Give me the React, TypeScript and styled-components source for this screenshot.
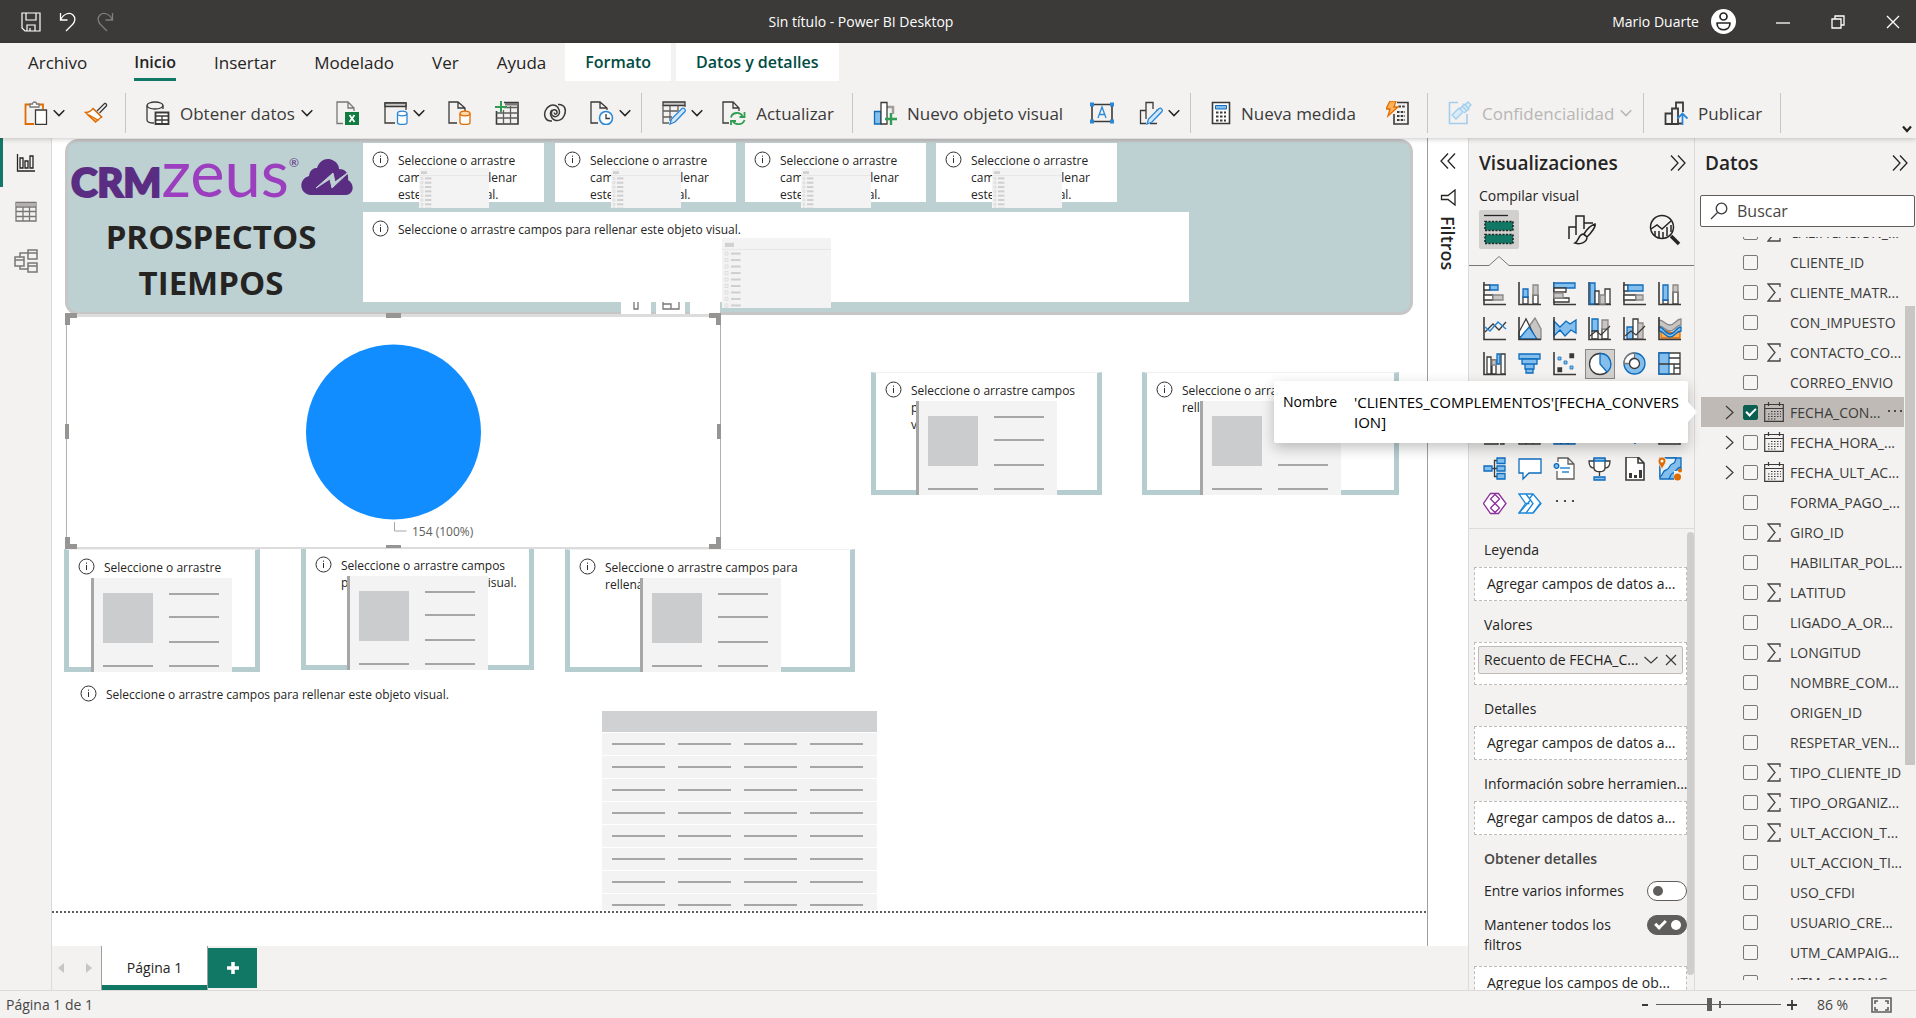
import React from "react";
import styled, { createGlobalStyle, css } from "styled-components";

const GlobalStyle = createGlobalStyle`
  *, *::before, *::after { box-sizing: border-box; }
  body { margin: 0; background: #f3f2f1; }
  body, button, input { font-family: "Open Sans", "Noto Sans", sans-serif; color: #252423; }
  button { border: 0; padding: 0; background: none; cursor: pointer; }
  svg { display: block; flex: none; }
`;

const GREEN = "#117865";
const DARK = "#3b3a39";
const BLUE = "#0f6cbd";
const SKY = "#83beec";
const ORANGE = "#e06c00";

const Shell = styled.div`
  height: 100vh;
  display: flex;
  flex-direction: column;
  background: #f3f2f1;
  overflow: hidden;
`;

/* ---------- title bar ---------- */

const TitleBar = styled.header`
  height: 43px;
  flex: none;
  display: grid;
  grid-template-columns: 1fr auto 1fr;
  align-items: center;
  background: #3b3a38;
  color: #fff;
  font-size: 14px;
  padding: 0 15px 0 21px;
`;

const QuickActions = styled.div`
  display: flex;
  gap: 17px;
`;

const WindowTitle = styled.h1`
  margin: 0;
  font-size: 14px;
  font-weight: 400;
  padding-right: 200px;
`;

const WindowSide = styled.div`
  display: flex;
  justify-content: flex-end;
  align-items: center;
  gap: 40px;
`;

const Account = styled.button`
  display: flex;
  align-items: center;
  gap: 12px;
  color: #fff;
  font-size: 14px;
`;

/* ---------- ribbon ---------- */

const Ribbon = styled.div`
  flex: none;
  background: #f3f2f1;
  box-shadow: 0 1px 5px rgba(0, 0, 0, 0.22);
  z-index: 2;
`;

const TabStrip = styled.nav`
  display: flex;
  height: 38px;
  padding-left: 28px;
`;

const FileTab = styled.button`
  margin-right: 28px;
  font-size: 17px;
  line-height: 39px;
`;

const ContextTabs = styled.div`
  display: flex;
  gap: 5px;
`;

const RibbonTab = styled.button<{ $active?: boolean; $context?: boolean }>`
  height: 38px;
  padding: 0 ${(p) => (p.$context ? 20 : 19)}px;
  font-size: ${(p) => (p.$active || p.$context ? 16 : 17)}px;
  line-height: 39px;
  color: ${(p) => (p.$context ? "#004b42" : "#252423")};
  font-weight: ${(p) => (p.$active || p.$context ? 600 : 400)};
  background: ${(p) => (p.$context ? "#fff" : "transparent")};
  span {
    display: block;
    height: 38px;
    border-bottom: 3px solid ${(p) => (p.$active ? GREEN : "transparent")};
  }
`;

const ToolRow = styled.div`
  height: 57px;
  padding-top: 7px;
  display: grid;
  grid-template-columns: 126px 516px 211px 338px 237px 216px 137px minmax(0, 1fr);
  align-items: center;
`;

const ToolGroup = styled.div<{ $roomy?: boolean }>`
  height: 40px;
  display: flex;
  align-items: center;
  justify-content: space-between;
  border-right: 1px solid #c8c6c4;
  padding: 0 ${(p) => (p.$roomy ? 17 : 10)}px 0 20px;
  &:first-child { padding-left: 24px; }
`;

const Tool = styled.button<{ $off?: boolean }>`
  display: flex;
  align-items: center;
  gap: 5px;
  font-size: 17px;
  color: ${(p) => (p.$off ? "#b8b6b4" : "#3b3a39")};
  white-space: nowrap;
  span { padding: 0 1px 0 5px; font-weight: 400; }
`;

const RibbonToggle = styled.div`
  display: flex;
  justify-content: flex-end;
  align-self: end;
  padding: 0 3px 3px 0;
`;

/* ---------- body ---------- */

const Body = styled.div`
  flex: 1;
  min-height: 0;
  position: relative;
  display: grid;
  grid-template-columns: 52px minmax(0, 1fr) 226px 222px;
`;

const ViewRail = styled.nav`
  border-right: 1px solid #dddbd9;
  display: flex;
  flex-direction: column;
`;

const ViewButton = styled.button<{ $active?: boolean }>`
  height: 49px;
  display: flex;
  align-items: center;
  justify-content: center;
  border-left: 3px solid ${(p) => (p.$active ? GREEN : "transparent")};
  border-right: 3px solid transparent;
`;

const Center = styled.main`
  display: flex;
  flex-direction: column;
  min-width: 0;
  min-height: 0;
`;

const Stage = styled.div`
  flex: 1;
  min-height: 0;
  display: flex;
  background: #fff;
`;

const Canvas = styled.section`
  flex: 1;
  min-width: 0;
  position: relative;
  overflow: hidden;
`;

type Box = { $x: number; $y: number; $w?: number; $h?: number };

const placed = css<Box>`
  position: absolute;
  left: ${(p) => p.$x}px;
  top: ${(p) => p.$y}px;
  ${(p) => p.$w && `width: ${p.$w}px;`}
  ${(p) => p.$h && `height: ${p.$h}px;`}
`;

const Banner = styled.div<Box>`
  ${placed}
  background: #bdd1d3;
  border: 3px solid #c6c6c6;
  border-radius: 13px;
`;

const Logo = styled.div<Box>`
  ${placed}
  display: flex;
  align-items: baseline;
  font-family: Lato, sans-serif;
  line-height: 60px;
`;

const LogoCrm = styled.span`
  font-size: 40px;
  font-weight: 900;
  color: #5b2d82;
  -webkit-text-stroke: 2px #5b2d82;
`;

const LogoZeus = styled.span`
  font-size: 65px;
  color: #9b3fbf;
`;

const LogoMark = styled.sup`
  align-self: flex-start;
  font-size: 12px;
  line-height: 42px;
  color: #5b2d82;
`;

const Cloud = styled.svg`
  align-self: center;
  margin-left: 2px;
`;

const ReportTitle = styled.h2<Box>`
  ${placed}
  margin: 0;
  text-align: center;
  font-size: 33px;
  line-height: 46px;
  font-weight: 700;
`;

const Visual = styled.article<Box & { $framed?: boolean }>`
  ${placed}
  background: #fff;
  ${(p) =>
    p.$framed &&
    `border: 5px solid #b5cdcf; border-top: 1px solid #f0f0f0;`}
`;

const HintClip = styled.div`
  height: 100%;
  overflow: hidden;
`;

const Hint = styled.p`
  margin: 0;
  display: flex;
  gap: 9px;
  padding: 8px 0 0 9px;
  font-size: 12px;
  line-height: 17px;
  white-space: nowrap;
`;

const HintLines = styled.span`
  padding-top: 1px;
  span { display: block; }
`;

const Ghost = styled.div<Box>`
  ${placed}
`;

const Selected = styled.article<Box>`
  ${placed}
  background: #fff;
  border: 1px solid #b3b0ad;
  border-top: 3px solid #dcdcdc;
  border-bottom: 2px solid #dcdcdc;
`;

const Handle = styled.i<Box & { $corner?: "tl" | "tr" | "bl" | "br" }>`
  ${placed}
  ${(p) =>
    p.$corner
      ? `border: 0 solid #979593;
         border-${p.$corner[0] === "t" ? "top" : "bottom"}-width: 5px;
         border-${p.$corner[1] === "l" ? "left" : "right"}-width: 5px;`
      : "background: #979593;"}
`;

const HeaderButton = styled.button<Box>`
  ${placed}
  background: #fff;
  display: flex;
  justify-content: center;
`;

const FoldLine = styled.div<Box>`
  ${placed}
  right: 0;
  height: 2px;
  background: repeating-linear-gradient(90deg, #605e5c 0 2px, transparent 2px 4px);
`;

const GhostTable = styled.div<Box>`
  ${placed}
  display: grid;
  grid-template-rows: 21px repeat(8, 22px);
  row-gap: 1px;
  overflow: hidden;
`;

const GhostHead = styled.div`
  background: #d0d1d3;
`;

const GhostRow = styled.div`
  background: #f3f3f3;
  display: grid;
  grid-template-columns: repeat(4, 53px);
  column-gap: 13px;
  padding-left: 10px;
  align-items: center;
  i { height: 2px; background: #a6a6a6; }
`;

/* ---------- filters strip ---------- */

const FilterStrip = styled.aside`
  width: 41px;
  border-left: 1px solid #a19f9d;
  display: flex;
  flex-direction: column;
  align-items: center;
  padding-top: 14px;
  gap: 19px;
`;

const FilterHead = styled.div`
  display: flex;
  flex-direction: column;
  align-items: center;
  gap: 10px;
`;

const FilterName = styled.h2`
  margin: 0;
  writing-mode: vertical-rl;
  font-size: 18px;
  line-height: 20px;
  font-weight: 600;
`;

/* ---------- page tabs ---------- */

const PageTabs = styled.div`
  height: 44px;
  flex: none;
  display: flex;
  align-items: center;
`;

const PageArrows = styled.div`
  width: 49px;
  display: flex;
  justify-content: space-between;
  padding: 0 9px 0 6px;
`;

const PageTab = styled.button`
  width: 107px;
  height: 44px;
  padding-bottom: 2px;
  background: #fff;
  border: 1px solid #a19f9d;
  border-width: 0 1px 0 1px;
  box-shadow: inset 0 -5px ${GREEN};
  font-size: 14px;
  font-weight: 500;
`;

const AddPage = styled.button`
  width: 49px;
  height: 40px;
  display: flex;
  align-items: center;
  justify-content: center;
  background: ${GREEN};
`;

/* ---------- panes ---------- */

const Pane = styled.aside`
  min-width: 0;
  min-height: 0;
  display: flex;
  flex-direction: column;
  border-left: 1px solid #dddbd9;
`;

const PaneHead = styled.div`
  height: 50px;
  flex: none;
  display: flex;
  align-items: center;
  justify-content: space-between;
  padding: 0 8px 0 10px;
`;

const PaneTitle = styled.h2`
  margin: 0;
  font-size: 19px;
  font-weight: 600;
`;

const PaneSub = styled.h3`
  margin: 0 0 6px 10px;
  font-size: 14px;
  line-height: 16px;
  font-weight: 500;
`;

const ModeTabs = styled.div`
  display: flex;
  justify-content: space-between;
  padding: 0 9px 0 10px;
`;

const ModeTab = styled.button<{ $active?: boolean }>`
  width: 40px;
  height: 39px;
  display: flex;
  align-items: center;
  justify-content: center;
  border-radius: 2px;
  background: ${(p) => (p.$active ? "#d2d0ce" : "transparent")};
`;

const Notch = styled.svg`
  width: 100%;
  height: 17px;
`;

const Gallery = styled.div`
  display: grid;
  grid-template-columns: repeat(6, 35px);
  grid-auto-rows: 35px;
  padding: 11px 0 6px 9px;
  border-bottom: 1px solid #dddbd9;
`;

const GalleryItem = styled.button<{ $active?: boolean }>`
  width: 30px;
  height: 30px;
  margin: 2px;
  display: flex;
  align-items: center;
  justify-content: center;
  ${(p) => p.$active && "background: #d2d0ce; box-shadow: inset 0 0 0 1px #8a8886;"}
`;

const Wells = styled.div`
  flex: 1;
  min-height: 0;
  display: grid;
  grid-template-columns: minmax(0, 1fr) 7px;
  overflow: hidden;
`;

const WellList = styled.div`
  padding: 4px 0 0 5px;
  min-width: 0;
`;

const WellName = styled.h4<{ $strong?: boolean }>`
  margin: 0;
  padding-left: 10px;
  font-size: 14px;
  line-height: 34px;
  font-weight: ${(p) => (p.$strong ? 600 : 400)};
  color: ${(p) => (p.$strong ? "#484644" : "#252423")};
  white-space: nowrap;
`;

const Well = styled.div<{ $filled?: boolean }>`
  height: ${(p) => (p.$filled ? 43 : 34)}px;
  margin-bottom: 7px;
  padding: ${(p) => (p.$filled ? "3px" : "0 5px 0 12px")};
  background: #fff;
  border: 1px dashed #bebbb8;
  font-size: 14px;
  line-height: 32px;
  white-space: nowrap;
  overflow: hidden;
`;

const Chip = styled.div`
  height: 28px;
  display: flex;
  align-items: center;
  justify-content: space-between;
  padding: 0 5px;
  background: #edebe9;
  border: 1px solid #bebbb8;
  border-radius: 2px;
  font-size: 14px;
`;

const ChipActions = styled.span`
  display: flex;
  align-items: center;
  gap: 7px;
`;

const SwitchGroup = styled.div`
  display: grid;
  gap: 4px;
  padding-bottom: 6px;
`;

const SwitchRow = styled.label`
  display: flex;
  justify-content: space-between;
  align-items: flex-start;
  padding: 5px 0 5px 10px;
  font-size: 14px;
  line-height: 20px;
`;

const SwitchText = styled.span`
  width: 150px;
`;

const Switch = styled.input`
  appearance: none;
  position: relative;
  margin: 0;
  width: 40px;
  height: 20px;
  border: 1px solid #605e5c;
  border-radius: 10px;
  background: #fff;
  &::before {
    content: "";
    position: absolute;
    left: 5px;
    top: 4px;
    width: 10px;
    height: 10px;
    border-radius: 50%;
    background: #605e5c;
  }
  &:checked { background: #605e5c; }
  &:checked::before { left: 23px; background: #fff; }
  &:checked::after {
    content: "";
    position: absolute;
    left: 7px;
    top: 4px;
    width: 11px;
    height: 7px;
    border: solid #fff;
    border-width: 0 0 3px 3px;
    transform: rotate(-45deg);
  }
`;

const Thumb = styled.div<{ $h: number; $top: number }>`
  height: ${(p) => p.$h}px;
  margin-top: ${(p) => p.$top}px;
  background: #c8c6c4;
`;

const RoundThumb = styled(Thumb)`
  border-radius: 4px;
  background: #d0cecc;
`;

/* ---------- fields ---------- */

const Search = styled.label`
  height: 32px;
  flex: none;
  margin: 7px 1px 0 5px;
  display: flex;
  align-items: center;
  gap: 7px;
  padding-left: 9px;
  background: #fff;
  border: 1px solid #605e5c;
  border-radius: 2px;
`;

const SearchInput = styled.input`
  flex: 1;
  min-width: 0;
  border: 0;
  outline: 0;
  background: none;
  font-size: 16px;
  &::placeholder { color: #484644; opacity: 1; }
`;

const FieldArea = styled.div`
  flex: 1;
  min-height: 0;
  margin: 10px 1px 10px 6px;
  display: grid;
  grid-template-columns: minmax(0, 1fr) 10px;
  column-gap: 1px;
  overflow: hidden;
`;

const FieldList = styled.ul`
  list-style: none;
  margin: -20px 0 0;
  padding: 0;
  min-width: 0;
`;

const Field = styled.li<{ $active?: boolean }>`
  height: 30px;
  display: grid;
  grid-template-columns: 24px minmax(0, 1fr) auto;
  align-items: center;
  padding-left: 18px;
  background: ${(p) => (p.$active ? "#bfbab6" : "transparent")};
`;

const FieldLabel = styled.label`
  grid-column: 2;
  display: grid;
  grid-template-columns: 15px 32px minmax(0, 1fr);
  align-items: center;
  font-size: 14px;
  color: #3b3a39;
  white-space: nowrap;
  svg { justify-self: center; }
`;

const FieldName = styled.span`
  grid-column: 3;
`;

const Expander = styled.button`
  grid-column: 1;
  padding-left: 6px;
`;

const Check = styled.input`
  appearance: none;
  position: relative;
  margin: 0;
  width: 15px;
  height: 15px;
  border: 1px solid #7a7876;
  border-radius: 2px;
  background: #f6f5f4;
  &:checked { background: #0b5f50; border-color: #0b5f50; }
  &:checked::after {
    content: "";
    position: absolute;
    left: 2px;
    top: 2px;
    width: 10px;
    height: 6px;
    border: solid #fff;
    border-width: 0 0 2px 2px;
    transform: rotate(-45deg);
  }
`;

const Tooltip = styled.div`
  position: absolute;
  right: 228px;
  top: 243px;
  z-index: 3;
  width: 414px;
  display: grid;
  grid-template-columns: 71px minmax(0, 1fr);
  padding: 11px 9px 11px 9px;
  background: #fff;
  border-radius: 2px;
  box-shadow: 0 5px 14px rgba(0, 0, 0, 0.24);
  color: #000;
  font-size: 14px;
  line-height: 20px;
  &::after {
    content: "";
    position: absolute;
    right: -9px;
    top: 21px;
    border: solid transparent;
    border-width: 10px 0 10px 9px;
    border-left-color: #fff;
  }
  b { font-size: 15px; font-weight: 500; overflow-wrap: anywhere; }
`;

/* ---------- status bar ---------- */

const StatusBar = styled.footer`
  height: 28px;
  flex: none;
  display: flex;
  justify-content: space-between;
  align-items: center;
  border-top: 1px solid #dddbd9;
  padding: 0 24px 0 6px;
  font-size: 14px;
  color: #484644;
  z-index: 1;
  background: #f3f2f1;
`;

const ZoomTools = styled.div`
  display: flex;
  align-items: center;
  gap: 5px;
`;

const ZoomSign = styled.button`
  width: 12px;
  display: flex;
  justify-content: center;
`;

const ZoomSlider = styled.input`
  appearance: none;
  width: 125px;
  height: 14px;
  margin: 0;
  background:
    linear-gradient(#605e5c, #605e5c) 63px 50% / 2px 7px no-repeat,
    linear-gradient(#605e5c, #605e5c) 0 50% / 100% 1px no-repeat;
  &::-webkit-slider-thumb {
    appearance: none;
    width: 5px;
    height: 13px;
    background: #605e5c;
  }
`;

const ZoomValue = styled.output`
  width: 63px;
  padding-right: 4px;
  text-align: center;
`;

/* ---------- drawings ---------- */

type ArtProps = { w?: number; h?: number; box?: string; children: React.ReactNode; sw?: number; c?: string };
const Art = ({ w = 24, h = 24, box, children, sw = 1.3, c = DARK }: ArtProps) => (
  <svg width={w} height={h} viewBox={box || `0 0 ${w} ${h}`} fill="none" stroke={c} strokeWidth={sw} aria-hidden="true">
    {children}
  </svg>
);

const Chevron = ({ c = "#252423" }: { c?: string }) => (
  <Art w={12} h={12} c={c} sw={1.5}><path d="M.7 3.2 6 8.6l5.3-5.4" /></Art>
);

const InfoIcon = () => (
  <Art w={17} h={17} c="#323130" sw={1}><circle cx="8.5" cy="8.5" r="7.5" /><path d="M8.5 7v5M8.5 4.6v1.2" /></Art>
);

const Double = ({ left }: { left?: boolean }) => (
  <Art w={16} h={18} sw={1.3} c="#252423">
    {left ? <path d="M8 1.5 1 9l7 7.500M15 1.500 8 9l7 7.500" /> : <path d="m1 1.500 7 7.500-7 7.500M8 1.500 15 9l-7 7.500" />}
  </Art>
);

const tool = {
  paste: <Art><path d="M6 3.500H1.500V23H10M15 3.500h4V8" stroke={ORANGE} strokeWidth="1.800" /><path d="M6 6V3h2.500a2 2 0 0 1 4 0H15v3z" fill="#fff" stroke="#797775" /><path d="M11.500 9h11v14.500h-11z" fill="#fff" /></Art>,
  brush: <Art><path d="m13 10 7.500-7.500a1.700 1.700 0 0 1 2 2.300L15.500 12M9 7.500l9 9" /><path d="m9 7.500 8.500 8.500-6 5L1.500 11.500c4 0 6-2 7.500-4z" fill="#fff" stroke={ORANGE} /><path d="m5 14 9 5-2.500 2L4 14z" fill="#ffb25a" stroke={ORANGE} /></Art>,
  data: <Art><ellipse cx="9" cy="4.500" rx="8" ry="3.500" /><path d="M1 4.500V19c0 1.800 3 3 7 3M17 4.500V8" /><path d="M9.500 11.500h13V23h-13z" fill="#fff" strokeWidth="1.800" /><path d="M9.500 15h13M9.500 19h13M16 15v8" /></Art>,
  excel: <Art><path d="M7 22.500H1V1h11l6 6v3M12 1v6h6" stroke="#797775" /><path d="M9 11h14v13H9z" fill="#107c41" stroke="none" /><path d="m13.500 14 5 7M18.500 14l-5 7" stroke="#fff" strokeWidth="1.800" /></Art>,
  hub: <Art><path d="M11 22H1V2h21v7" /><path d="M1 2h21v3.500H1z" fill="#c8c6c4" /><path d="M13.500 12.500v9c0 2.600 9.500 2.600 9.500 0v-9" fill="#fff" stroke="#2b88d8" /><ellipse cx="18.200" cy="12.500" rx="4.700" ry="2.300" fill="#fff" stroke="#2b88d8" /></Art>,
  sql: <Art><path d="M9 22H1V1h9l7 6v3M10 1v6h7" /><path d="M12 12.500v9c0 2.600 10 2.600 10 0v-9" fill="#fff" stroke={ORANGE} /><ellipse cx="17" cy="12.500" rx="5" ry="2.300" fill="#ffd8ae" stroke={ORANGE} /></Art>,
  enter: <Art><path d="M9 1.500h14V23H1.500V10" strokeWidth="1.600" /><path d="M1.500 12H23M1.500 17H23M8.500 9v14M15.500 5v18M9 6.500h14" stroke="#605e5c" /><path d="M10 2h13v2.500H10z" fill="#797775" stroke="none" /><path d="M6 0v12M0 6h12" stroke="#2f9e52" strokeWidth="2" /></Art>,
  verse: <Art sw={1.500}><path d="M9 20C2 20.500.500 14 2.500 9.500S9 3 12.500 4.500 18 12 15 14.500 8 15 8.500 11.500 13.500 8 14 11s-3 2.500-2.500.500" /><path d="M15 3.500C22 3 23.500 9 21.500 14S15 20.500 11.500 19 6 12 9 9" /></Art>,
  recent: <Art><path d="M8 22H1V1h9l7 6v2M10 1v6h7" /><circle cx="16" cy="17" r="6.500" fill="#fff" stroke="#2b88d8" strokeWidth="1.600" /><path d="M16 13v4.500h4" /></Art>,
  transform: <Art><path d="M1 1h22v3.500H1z" fill="#c8c6c4" /><path d="M1 4v18h6M23 4v2M1 10h15M1 16h9M8 4.500V20M16 4.500V10" stroke="#605e5c" /><path d="m8 23 1.500-5L20 7.500c2-1 4 1 3 3L13 21z" fill="#cfe6f8" stroke="#2b88d8" /></Art>,
  refresh: <Art><path d="M7 22H1V1h10l6 6v3M11 1v6h6" /><path d="M9 16.500c1-5.500 9-6 11.500-1.500M22.500 11v5h-5M22.500 19c-1.500 5-9 5.500-11.500 1.500M9 24.500V20h5" stroke="#2f9e52" strokeWidth="1.800" /></Art>,
  visual: <Art><path d="M1.500 10.500H8V23H1.500z" fill={SKY} stroke={BLUE} /><path d="M14 6h6v7" stroke="#a19f9d" strokeWidth="2.500" /><path d="M8 1.500h6V23H8z" fill="#fff" /><path d="M18 12v12M12 18h12" stroke="#2f9e52" strokeWidth="2.400" /></Art>,
  text: <Art w={26}><path d="M3 3.500h20v17H3z" strokeWidth="1.600" /><path d="M1 1.500h4v4H1zM21 1.500h4v4h-4zM1 18.500h4v4H1zM21 18.500h4v4h-4z" fill="#2b88d8" stroke="none" /><path d="m9 17 4-11 4 11M10.500 13.500h5" stroke="#2b88d8" /></Art>,
  shapes: <Art><path d="M7 22.500H1.500V9.500H7M7 18V1.500h7V8M17 9.500h2M18 22.500h-7" /><path d="m8 23 1.500-5L20 7.500c2-1 4 1 3 3L13 21z" fill="#cfe6f8" stroke="#2b88d8" /></Art>,
  calc: <Art w={20}><path d="M1.500 1.500h17v21h-17z" fill="#fff" strokeWidth="1.600" /><path d="M4.500 4.500h11v3.500h-11z" fill={SKY} stroke={BLUE} strokeWidth="1" /><path d="M5 11.500h10M5 15.500h10M5 19.500h10" strokeDasharray="2.500 1.500" strokeWidth="2.200" /></Art>,
  quick: <Art><path d="M11 1.500h11V23H8V13" strokeWidth="1.600" /><path d="M12.500 5.500h6.500M11 11h8M11 15h8M11 19h8" strokeDasharray="2.500 1.200" strokeWidth="2" /><path d="M4 0h6L8 6h4L2 15l2-7H0z" fill="#ffb25a" stroke={ORANGE} /></Art>,
  label: <Art c="#a3cdea"><path d="M10 1.500H1.500v21H19V13" strokeWidth="1.600" /><path d="m4 14 7-7 4 4-7 7zM12 8l4-5 5 5-5 4M14 5l5 5M20 1l3 3-3 3-3-3z" fill="#d8ebf8" /></Art>,
  publish: <Art><path d="M1.500 12.500H8V23H1.500zM8 12V7.500h6V23H8M12 7V1.500h7V11M14 22.500h4" strokeWidth="1.800" /><path d="M18.500 24V13M13.500 17.500l5-5 5 5" stroke="#2b88d8" strokeWidth="1.800" /></Art>,
};

const axis = <path d="M1 0v22.500h22" stroke={DARK} strokeWidth="1.600" />;
const G = "#c8c6c4";
const blue = { fill: SKY, stroke: BLUE };
const gray = { fill: G, stroke: "#8a8886" };

const chartIcons: React.ReactNode[] = [
  <>{axis}<path d="M1 3h6v5H1zM1 13h9v5H1z" fill="#fff" /><path d="M7 3h8v5H7z" {...blue} /><path d="M10 13h10v5H10z" {...gray} /></>,
  <>{axis}<path d="M5 15h5v7H5zM15 13h5v9h-5z" fill="#fff" /><path d="M5 7h5v8H5z" {...blue} /><path d="M15 3h5v10h-5z" {...gray} /></>,
  <>{axis}<path d="M1 1h21v5H1z" {...blue} /><path d="M1 6h12v4H1zM1 16h15v4H1z" fill="#fff" /><path d="M1 11h9v5H1z" {...gray} /></>,
  <>{axis}<path d="M2 1h5v21H2z" {...blue} /><path d="M7 9h4v13H7zM17 7h5v15h-5z" fill="#fff" /><path d="M12 13h5v9h-5z" {...gray} /></>,
  <>{axis}<path d="M1 3h4v6H1zM1 13h12v5H1z" fill="#fff" /><path d="M5 3h15v6H5z" {...blue} /><path d="M13 13h7v5h-7z" {...gray} /></>,
  <>{axis}<path d="M5 18h5v4H5zM15 10h5v12h-5z" fill="#fff" /><path d="M5 3h5v15H5z" {...blue} /><path d="M15 3h5v7h-5z" {...gray} /></>,
  <>{axis}<path d="m2 15 8-8 6 6 7-8" /><path d="m2 10 5 4 8-9 8 7" stroke="#2b88d8" strokeWidth="1.600" /></>,
  <><path d="m12 8 5-7 6 11v10H12z" {...gray} /><path d="M1 15 8 2l9 18H1z" fill="#fff" /><path d="m1 22 10-12 8 12z" {...blue} />{axis}</>,
  <><path d="m1 4 6 6 6-6 4 3 6-4v13l-5-3-6 6-5-6-6 6z" {...blue} />{axis}</>,
  <><path d="M4 2h6v12H4z" {...blue} /><path d="M4 14h6v8H4zM14 12h6v10h-6z" fill="#fff" /><path d="M14 3h6v9h-6z" {...gray} />{axis}<path d="m2 19 6-5 5 4 9-9" /></>,
  <><path d="M4 10h6v12H4z" {...blue} /><path d="M10 2h5v20h-5z" fill="#fff" /><path d="M15 6h5v16h-5z" {...gray} />{axis}<path d="m2 19 6-5 5 4 9-9" /></>,
  <><path d="M3 14h5c3 0 5 3 8 1h6v6H3z" fill="#ffb25a" stroke={ORANGE} /><path d="M1 3c5 0 6 5 11 5s6-6 11-6v6c-5 0-6 6-11 6S6 9 1 9z" {...gray} /><path d="M1 10c5 0 6 7 11 7s6-7 11-7v4c-5 0-6 6-11 6S6 14 1 14z" {...blue} />{axis}</>,
  <>{axis}<path d="M4 5h4v17H4zM9 8h4v14H9zM18 2h4v20h-4z" fill="#fff" /><path d="M9 8h4v5H9z" {...gray} /><path d="M14 2h3v10h-3z" {...blue} /></>,
  <><path d="M1 2h21v5H1z" {...blue} /><path d="M4 7h15v5H4zM7 12h9v5H7zM8 17h7v4H8z" {...blue} /></>,
  <>{axis}<path d="M5 5h3v3H5zM11 9h3v3h-3zM17 14h3v3h-3z" {...blue} strokeWidth="0.800" /><path d="M17 2h3.500v3.500H17zM5 16h3.500v3.500H5z" fill={DARK} /></>,
  <><circle cx="12" cy="12" r="10.500" fill="#fff" /><path d="M12 1.500a10.500 10.500 0 0 1 7 18.500l-7-8z" {...blue} /></>,
  <><circle cx="11.500" cy="11.500" r="10.500" {...blue} /><path d="M1 11.500A10.500 10.500 0 0 1 11.500 1v5a5 5 0 0 0-5 5.500z" fill="#fff" stroke="#797775" /><circle cx="11.500" cy="11.500" r="5" fill="#fff" /></>,
  <><path d="M1 1h21v21H1z" fill="#fff" /><path d="M1 1h10v21H1z" {...blue} /><path d="M1 12h21M16 12v10M16 16h6M11 6h11" /></>,
  <><circle cx="11.500" cy="11.500" r="10" {...blue} /><path d="M2 9h19M2 15h19" /></>,
  <><path d="M1 3h21v17H1z" {...blue} /></>,
  <><path d="M2 20V8l8-6 10 6v12z" {...blue} /></>,
  <><path d="M2 18a10 10 0 0 1 20 0" {...blue} /></>,
  <><path d="M1 5h21v14H1z" fill="#fff" /></>,
  <><path d="M1 3h21v17H1zM1 8h21" fill="#fff" /></>,
  <><path d="M1 3h14v19H1M17 22h4v-6" /></>,
  <><path d="M1 2h21v20H1zM1 8h21M8 2v20M15 2v20M1 15h21" fill="#fff" /></>,
  <><path d="M1 2h21v20H1z" {...blue} /><path d="M1 8h21M8 2v20M15 2v20M1 15h21" /></>,
  <><path d="M3 5 9 18 15 5" stroke="#2b88d8" /></>,
  <><path d="M12 2v20" stroke="#2b88d8" strokeWidth="2" /></>,
  <><path d="M1 2h21v20H1zM1 8h21" fill="#fff" strokeWidth="1.600" /></>,
  <><path d="M8 11.500h6M14 3.500h-2.500v16H14M11 11.500h4" /><path d="M1 9h8v5H1zM14 1h8v5.500h-8zM14 9h8v5h-8zM14 16.500h8V22h-8z" {...blue} /></>,
  <path d="M1 2h22v14H11l-6 6v-6H1z" stroke={BLUE} fill="#fff" />,
  <><path d="M5 5V1h10l6 6v15H4v-8M15 1v6h6" fill="#fff" stroke="#605e5c" /><circle cx="3.500" cy="9" r="2.300" {...blue} /><path d="M7 11h10M9 15h7" stroke="#2b88d8" strokeWidth="1.600" /></>,
  <><path d="M6 2h11v9c0 5-11 5-11 0zM6 4H1c0 5 2 7 5 7M17 4h5c0 5-2 7-5 7M11.500 15v4" fill="#fff" /><path d="M6 1h11v3H6zM6 20h11v3H6z" {...blue} /></>,
  <><path d="M3 0h12l6 6v17H3zM15 0v6h6" fill="#fff" strokeWidth="1.600" /><path d="M6 16h3v5H6zM11 18h3v3h-3zM16 13h3v8h-3z" fill={DARK} stroke="none" /></>,
  <><path d="M2 1h21v21H2z" {...blue} /><path d="M2 1h16c-1 4-1 5-4 6s-2 5-6 6-3 6-6 7z" fill="#e3f1fb" stroke={BLUE} /><path d="M11 22c2-3 1-5 4-6s3-5 8-6" stroke={BLUE} /><path d="M16 14h8v10h-8z" fill="#f3f2f1" stroke="none" /><path d="M4 0a4 4 0 0 1 4 4c0 3-3 5-4 9-1-4-4-6-4-9a4 4 0 0 1 4-4z" fill={ORANGE} stroke="#f3f2f1" strokeWidth="0.800" /><circle cx="4" cy="4" r="1.500" fill="#fff" stroke="none" /><circle cx="19.500" cy="20" r="3.500" fill={ORANGE} stroke="none" /><circle cx="22" cy="13.500" r="2" fill={ORANGE} stroke="none" /></>,
  <g stroke="#8b2f9c"><path d="M7.500 1.500h8l7.500 10-7.500 10h-8L.500 11.500z" fill="#fff" /><path d="m12 2.500 4.500 4.500-4.500 4.500L7.500 7zM12 11.500l4.500 4.500-4.500 4.500L7.500 16zM7.500 7 12 11.500 7.500 16M16.500 7 12 11.500l4.500 4.500" /></g>,
  <g stroke="#1a86d9"><path d="M1 2h14l8 9.500-8 9.500H1l6.500-9.500z" fill="#fff" /><path d="m8 2 7 9.500-7 9.500M7.500 11.500h4M1 21 13 7.500M15 11.500 8 21M15 2l-3.500 4.500M22 11.500 15 21" /></g>,
  <g fill="#252423" stroke="none"><circle cx="4" cy="9" r="1.100" /><circle cx="12" cy="9" r="1.100" /><circle cx="20" cy="9" r="1.100" /></g>,
];

const Sigma = () => <Art w={14} h={19} c="#484644"><path d="M13 4V1H1l7 8.500L1 18h12v-3" /></Art>;

const Calendar = () => (
  <Art w={20} h={20} c="#3b3a39" sw={1.200}>
    <path d="M.7 2.500h18.600v16.800H.7zM.7 6.500h18.600M4.500 0v4M15.500 0v4" />
    <path d="M7 9.500h10M4 12h13M4 14.500h13M4 17h8" strokeDasharray="1.500 1.500" />
  </Art>
);

const SlicerGhost = ({ w, h, rows, unit }: { w: number; h: number; rows: number; unit: number }) => (
  <svg width={w} height={h} aria-hidden="true">
    <path d={`M0 0h${w}v${h}H0z`} fill="#f3f3f3" />
    <path d={`M${unit / 2} ${unit * 0.8}h${unit * 1.5}v${unit * 0.7}h-${unit * 1.5}z`} fill="#d0d1d3" />
    <path d={`M0 ${unit * 1.9}h${w}`} stroke="#e6e6e6" />
    {Array.from({ length: rows }, (_, i) => {
      const y = unit * 2.600 + i * unit * 1.080;
      return (
        <g key={i}>
          <path d={`M${unit / 2} ${y - unit / 4}h${unit / 2}v${unit / 2}h-${unit / 2}z`} fill="none" stroke="#dddddd" />
          <path d={`M${unit * 1.500} ${y}h${unit * 1.600}`} stroke="#cfcfcf" strokeWidth="2" />
        </g>
      );
    })}
  </svg>
);

const CardGhost = () => (
  <svg width="141" height="94" aria-hidden="true">
    <path d="M0 0h141v94H0z" fill="#f3f3f3" />
    <path d="M0 0h3v94H0z" fill="#a6a6a6" />
    <path d="M12 15h50v50H12z" fill="#cbccce" />
    <path d="M78 16h50M78 39h50M78 64h50M78 88h50M12 88h50" stroke="#a6a6a6" strokeWidth="2" />
  </svg>
);

/* ---------- content ---------- */

const ribbonTabs = ["Inicio", "Insertar", "Modelado", "Ver", "Ayuda"];
const slicers = [311, 503, 693, 884];

const HINT = "Seleccione o arrastre campos para rellenar este objeto visual.";
const cards = [
  { x: 12, y: 411, w: 196, ghost: 22, lines: ["Seleccione o arrastre"] },
  { x: 249, y: 409, w: 233, ghost: 41, lines: ["Seleccione o arrastre campos", "para rellenar este objeto visual."] },
  { x: 513, y: 411, w: 290, ghost: 70, lines: ["Seleccione o arrastre campos para", "rellenar este objeto visual."] },
  { x: 819, y: 234, w: 231, ghost: 40, lines: ["Seleccione o arrastre campos", "para rellenar este objeto", "visual."] },
  { x: 1090, y: 234, w: 257, ghost: 53, lines: ["Seleccione o arrastre campos", "rellenar este objeto visual."] },
];

type FieldRow = { name: string; kind?: "sum" | "date"; active?: boolean };
const fields: FieldRow[] = [
  { name: "CALIFICACION_...", kind: "sum" },
  { name: "CLIENTE_ID" },
  { name: "CLIENTE_MATR...", kind: "sum" },
  { name: "CON_IMPUESTO" },
  { name: "CONTACTO_CO...", kind: "sum" },
  { name: "CORREO_ENVIO" },
  { name: "FECHA_CON...", kind: "date", active: true },
  { name: "FECHA_HORA_...", kind: "date" },
  { name: "FECHA_ULT_AC...", kind: "date" },
  { name: "FORMA_PAGO_..." },
  { name: "GIRO_ID", kind: "sum" },
  { name: "HABILITAR_POL..." },
  { name: "LATITUD", kind: "sum" },
  { name: "LIGADO_A_OR..." },
  { name: "LONGITUD", kind: "sum" },
  { name: "NOMBRE_COM..." },
  { name: "ORIGEN_ID" },
  { name: "RESPETAR_VEN..." },
  { name: "TIPO_CLIENTE_ID", kind: "sum" },
  { name: "TIPO_ORGANIZ...", kind: "sum" },
  { name: "ULT_ACCION_T...", kind: "sum" },
  { name: "ULT_ACCION_TI..." },
  { name: "USO_CFDI" },
  { name: "USUARIO_CRE..." },
  { name: "UTM_CAMPAIG..." },
  { name: "UTM_CAMPAIG..." },
];

const HintText = ({ lines }: { lines: string[] }) => (
  <Hint>
    <InfoIcon />
    <HintLines>{lines.map((l) => <span key={l}>{l}</span>)}</HintLines>
  </Hint>
);

const Report = () => (
  <Canvas aria-label="Lienzo del informe">
    <Banner $x={13} $y={1} $w={1348} $h={176} />
    <Logo $x={19} $y={4}>
      <LogoCrm>CRM</LogoCrm>
      <LogoZeus>zeus</LogoZeus>
      <LogoMark>®</LogoMark>
      <Cloud width="52" height="38" viewBox="0 0 52 38" aria-hidden="true">
        <path d="M10 37C-2 36-3 21 8 18 9 11 13 10 16 10 19 1 27-1 33 3c4 2 5 6 5 8 6 0 10 4 9 11 7 4 6 14-2 15z" fill="#5b2d82" />
        <path d="M15 30 32 15l2 9 15-11-18 17-2-9z" fill="#bdd1d3" stroke="#bdd1d3" strokeLinejoin="round" />
      </Cloud>
    </Logo>
    <ReportTitle $x={16} $y={76} $w={286}>PROSPECTOS<br />TIEMPOS</ReportTitle>

    {slicers.map((x) => (
      <Visual key={x} $x={x} $y={5} $w={181} $h={59}>
        <HintClip>
          <HintText lines={["Seleccione o arrastre", "campos para rellenar", "este objeto visual."]} />
        </HintClip>
        <Ghost $x={56} $y={25}><SlicerGhost w={70} h={40} rows={8} unit={4} /></Ghost>
      </Visual>
    ))}
    <Visual $x={311} $y={74} $w={826} $h={90}>
      <HintText lines={[HINT]} />
    </Visual>
    <HeaderButton $x={569} $y={164} $w={30} $h={12} aria-label="Filtro">
      <Art w={14} h={12} c="#797775"><path d="M5 0v7h4V0" /></Art>
    </HeaderButton>
    <HeaderButton $x={604} $y={164} $w={29} $h={12} aria-label="Modo de enfoque">
      <Art w={18} h={12} c="#797775"><path d="M1 0v7h16V0M1 2h8v5" /></Art>
    </HeaderButton>
    <HeaderButton $x={638} $y={164} $w={30} $h={12} aria-label="Más opciones" />

    {cards.map((c) => (
      <Visual key={c.x} $x={c.x} $y={c.y} $w={c.w} $h={123} $framed>
        <HintText lines={c.lines} />
        <Ghost $x={c.ghost} $y={28}><CardGhost /></Ghost>
      </Visual>
    ))}

    <Selected $x={14} $y={176} $w={655} $h={235}>
      <svg width="100%" height="230" viewBox="0 0 653 230" aria-label="Gráfico circular">
        <circle cx="326.500" cy="115" r="87.500" fill="#118dff" />
        <path d="M327.500 205v9h12" fill="none" stroke="#a6a6a6" />
        <text x="345" y="219" fontSize="12" fill="#605e5c">154 (100%)</text>
      </svg>
    </Selected>
    <Handle $x={13} $y={175} $w={12} $h={12} $corner="tl" />
    <Handle $x={657} $y={175} $w={12} $h={12} $corner="tr" />
    <Handle $x={13} $y={399} $w={12} $h={12} $corner="bl" />
    <Handle $x={657} $y={399} $w={12} $h={12} $corner="br" />
    <Handle $x={334} $y={175} $w={15} $h={5} />
    <Handle $x={334} $y={407} $w={15} $h={3} />
    <Handle $x={13} $y={286} $w={4} $h={15} />
    <Handle $x={665} $y={286} $w={4} $h={15} />
    <Ghost $x={670} $y={100}><SlicerGhost w={109} h={70} rows={9} unit={6} /></Ghost>

    <Visual $x={19} $y={539} $w={400} $h={34}>
      <HintText lines={[HINT]} />
    </Visual>
    <GhostTable $x={550} $y={573} $w={275} $h={199}>
      <GhostHead />
      {Array.from({ length: 8 }, (_, i) => (
        <GhostRow key={i}><i /><i /><i /><i /></GhostRow>
      ))}
    </GhostTable>
    <FoldLine $x={0} $y={773} />
  </Canvas>
);

export default function App() {
  return (
    <Shell>
      <GlobalStyle />
      <TitleBar>
        <QuickActions>
          <button aria-label="Guardar"><Art w={20} h={20} c="#fff" sw={1.200}><path d="M1 1h18v18H4l-3-3zM5 1v7h10V1M6 19v-6h8v6M9 19v-3" /></Art></button>
          <button aria-label="Deshacer"><Art w={20} h={20} c="#fff"><path d="M2.500 1v7h7M2.500 8C6 1 12 0 15 3s2 7-.500 9.500L8 19" /></Art></button>
          <button aria-label="Rehacer"><Art w={20} h={20} c="#807e7c"><path d="M17.500 1v7h-7M17.500 8C14 1 8 0 5 3s-2 7 .5 9.500L12 19" /></Art></button>
        </QuickActions>
        <WindowTitle>Sin título - Power BI Desktop</WindowTitle>
        <WindowSide>
          <Account>
            Mario Duarte
            <Art w={25} h={25} c="#252423" sw={1.700}>
              <circle cx="12.500" cy="12.500" r="12.500" fill="#fff" stroke="none" />
              <circle cx="12.500" cy="7.500" r="3.500" />
              <path d="M6 14h13c0 9-13 9-13 0z" strokeLinejoin="round" />
            </Art>
          </Account>
          <button aria-label="Minimizar"><Art w={15} h={15} c="#fff"><path d="M0 9h14" /></Art></button>
          <button aria-label="Restaurar"><Art w={15} h={15} c="#fff"><path d="M1 5h9v9H1zM4 5V2h9v9h-3" /></Art></button>
          <button aria-label="Cerrar"><Art w={15} h={15} c="#fff"><path d="m1 2 12 12M13 2 1 14" /></Art></button>
        </WindowSide>
      </TitleBar>

      <Ribbon>
        <TabStrip>
          <FileTab>Archivo</FileTab>
          {ribbonTabs.map((t) => (
            <RibbonTab key={t} $active={t === "Inicio"}><span>{t}</span></RibbonTab>
          ))}
          <ContextTabs>
            <RibbonTab $context><span>Formato</span></RibbonTab>
            <RibbonTab $context><span>Datos y detalles</span></RibbonTab>
          </ContextTabs>
        </TabStrip>
        <ToolRow>
          <ToolGroup $roomy>
            <Tool aria-label="Pegar">{tool.paste}<Chevron /></Tool>
            <Tool aria-label="Copiar formato">{tool.brush}</Tool>
          </ToolGroup>
          <ToolGroup>
            <Tool>{tool.data}<span>Obtener datos</span><Chevron /></Tool>
            <Tool aria-label="Excel">{tool.excel}</Tool>
            <Tool aria-label="Centro de datos">{tool.hub}<Chevron /></Tool>
            <Tool aria-label="SQL Server">{tool.sql}</Tool>
            <Tool aria-label="Especificar datos">{tool.enter}</Tool>
            <Tool aria-label="Dataverse">{tool.verse}</Tool>
            <Tool aria-label="Orígenes recientes">{tool.recent}<Chevron /></Tool>
          </ToolGroup>
          <ToolGroup $roomy>
            <Tool aria-label="Transformar datos">{tool.transform}<Chevron /></Tool>
            <Tool>{tool.refresh}<span>Actualizar</span></Tool>
          </ToolGroup>
          <ToolGroup>
            <Tool>{tool.visual}<span>Nuevo objeto visual</span></Tool>
            <Tool aria-label="Cuadro de texto">{tool.text}</Tool>
            <Tool aria-label="Formas">{tool.shapes}<Chevron /></Tool>
          </ToolGroup>
          <ToolGroup $roomy>
            <Tool>{tool.calc}<span>Nueva medida</span></Tool>
            <Tool aria-label="Medida rápida">{tool.quick}</Tool>
          </ToolGroup>
          <ToolGroup>
            <Tool $off>{tool.label}<span>Confidencialidad</span><Chevron c="#b8b6b4" /></Tool>
          </ToolGroup>
          <ToolGroup>
            <Tool>{tool.publish}<span>Publicar</span></Tool>
          </ToolGroup>
          <RibbonToggle>
            <button aria-label="Contraer cinta"><Art w={12} h={12} c="#252423" sw={2.200}><path d="m2 3.500 4 4.500 4-4.500" /></Art></button>
          </RibbonToggle>
        </ToolRow>
      </Ribbon>

      <Body>
        <ViewRail>
          <ViewButton $active aria-label="Vista de informe">
            <Art w={20} h={20} c="#252423"><path d="M1.500 1v17H19M4 5h3v10H4zM9 8h3v7H9zM14 3h3v12h-3z" /></Art>
          </ViewButton>
          <ViewButton aria-label="Vista de datos">
            <Art w={22} h={22} c="#797775"><path d="M1 1.500h20V20H1zM1 6h20M1 10.500h20M1 15.500h20M8 6v14M14.500 6v14" /><path d="M1 2h20v3H1z" fill="#b3b0ad" stroke="none" /></Art>
          </ViewButton>
          <ViewButton aria-label="Vista de modelo">
            <Art w={24} h={24} c="#797775" sw={1.500}><path d="M1 8h9v9H1zM14 1h9v9h-9zM14 14h9v9h-9zM1 11h9M14 4h9M14 17h9M6 8V4h8M6 17v3h8" /></Art>
          </ViewButton>
        </ViewRail>

        <Center>
          <Stage>
            <Report />
            <FilterStrip>
              <button aria-label="Expandir filtros"><Double left /></button>
              <FilterHead>
                <Art w={16} h={17} c="#252423"><path d="M15 1v15L8 10.500H1.500v-4H8z" /></Art>
                <FilterName>Filtros</FilterName>
              </FilterHead>
            </FilterStrip>
          </Stage>
          <PageTabs>
            <PageArrows>
              <Art w={7} h={12} c="none"><path d="M6 1v10L0 6z" fill="#c8c6c4" /></Art>
              <Art w={7} h={12} c="none"><path d="M1 1v10l6-5z" fill="#c8c6c4" /></Art>
            </PageArrows>
            <PageTab>Página 1</PageTab>
            <AddPage aria-label="Nueva página"><Art w={14} h={14} c="#fff" sw={3.500}><path d="M7 1v12M1 7h12" /></Art></AddPage>
          </PageTabs>
        </Center>

        <Pane>
          <PaneHead>
            <PaneTitle>Visualizaciones</PaneTitle>
            <button aria-label="Contraer visualizaciones"><Double /></button>
          </PaneHead>
          <PaneSub>Compilar visual</PaneSub>
          <ModeTabs>
            <ModeTab $active aria-label="Compilar">
              <Art w={30} h={32} c="#252423">
                <path d="M0 1.500h24" />
                <path d="M1 7.500h28v9H1zM1 20.500h28v9H1z" fill={GREEN} strokeDasharray="2 1.500" strokeWidth="1.600" />
              </Art>
            </ModeTab>
            <ModeTab aria-label="Formato">
              <Art w={30} h={30} c="#252423" sw={1.500}>
                <path d="M2 24V12h7M9 20V1h8v13M17 8h9" />
                <path d="M28 9c1 2-3 8-8 13l-3-3c3-5 8-9 11-10zM16 19l4 3c0 5-6 8-12 6 4-2 3-8 8-9z" />
              </Art>
            </ModeTab>
            <ModeTab aria-label="Analítica">
              <Art w={32} h={32} c="#252423" sw={1.500}>
                <circle cx="13" cy="13" r="11.500" />
                <path d="m2 15 6-4 5 4 9-8M6 22v-5M10 24v-7M14 24v-6M18 22V13M22 18v-7" />
                <path d="m22 22 8 8" strokeWidth="3.500" />
              </Art>
            </ModeTab>
          </ModeTabs>
          <Notch fill="none" stroke="#797775" aria-hidden="true"><path d="M0 16.500h20L30 7.500l10 9h600" /></Notch>
          <Gallery>
            {chartIcons.map((icon, i) => (
              <GalleryItem key={i} $active={i === 15} aria-label={`Objeto visual ${i + 1}`}>
                <Art w={24} h={24}>{icon}</Art>
              </GalleryItem>
            ))}
          </Gallery>
          <Wells>
            <WellList>
              <WellName>Leyenda</WellName>
              <Well>Agregar campos de datos a...</Well>
              <WellName>Valores</WellName>
              <Well $filled>
                <Chip>
                  Recuento de FECHA_C...
                  <ChipActions>
                    <button aria-label="Opciones del campo"><Art w={14} h={12} sw={1.200}><path d="m.5 3 6.500 6 6.500-6" /></Art></button>
                    <button aria-label="Quitar campo"><Art w={12} h={12} sw={1.200}><path d="m1 1 10 10M11 1 1 11" /></Art></button>
                  </ChipActions>
                </Chip>
              </Well>
              <WellName>Detalles</WellName>
              <Well>Agregar campos de datos a...</Well>
              <WellName>Información sobre herramien...</WellName>
              <Well>Agregar campos de datos a...</Well>
              <WellName $strong>Obtener detalles</WellName>
              <SwitchGroup>
                <SwitchRow>
                  <SwitchText>Entre varios informes</SwitchText>
                  <Switch type="checkbox" role="switch" />
                </SwitchRow>
                <SwitchRow>
                  <SwitchText>Mantener todos los filtros</SwitchText>
                  <Switch type="checkbox" role="switch" defaultChecked />
                </SwitchRow>
              </SwitchGroup>
              <Well>Agregue los campos de ob...</Well>
            </WellList>
            <RoundThumb $h={443} $top={3} />
          </Wells>
        </Pane>

        <Pane>
          <PaneHead>
            <PaneTitle>Datos</PaneTitle>
            <button aria-label="Contraer datos"><Double /></button>
          </PaneHead>
          <Search>
            <Art w={18} h={18}><circle cx="11.500" cy="6.500" r="5.300" /><path d="m7.500 10.500-6.500 6.500" /></Art>
            <SearchInput type="search" placeholder="Buscar" aria-label="Buscar" />
          </Search>
          <FieldArea>
            <FieldList>
              {fields.map((f, i) => (
                <Field key={i} $active={f.active}>
                  {f.kind === "date" && (
                    <Expander aria-label="Expandir"><Art w={9} h={15} sw={1.200}><path d="m1 1 7 6.500L1 14" /></Art></Expander>
                  )}
                  <FieldLabel>
                    <Check type="checkbox" defaultChecked={f.active} />
                    {f.kind === "sum" && <Sigma />}
                    {f.kind === "date" && <Calendar />}
                    <FieldName>{f.name}</FieldName>
                  </FieldLabel>
                  {f.active && (
                    <button aria-label="Más opciones"><Art w={18} h={6} c="none"><g fill="#252423"><circle cx="3" cy="2" r="1" /><circle cx="9" cy="2" r="1" /><circle cx="15" cy="2" r="1" /></g></Art></button>
                  )}
                </Field>
              ))}
            </FieldList>
            <Thumb $h={459} $top={69} />
          </FieldArea>
        </Pane>

        <Tooltip role="tooltip">
          <span>Nombre</span>
          <b>'CLIENTES_COMPLEMENTOS'[FECHA_CONVERSION]</b>
        </Tooltip>
      </Body>

      <StatusBar>
        <span>Página 1 de 1</span>
        <ZoomTools>
          <ZoomSign aria-label="Alejar"><Art w={6} h={6} sw={2}><path d="M0 3h6" /></Art></ZoomSign>
          <ZoomSlider type="range" min={10} max={200} defaultValue={90} aria-label="Zoom" />
          <ZoomSign aria-label="Acercar"><Art w={10} h={10} sw={1.800}><path d="M5 0v10M0 5h10" /></Art></ZoomSign>
          <ZoomValue>86 %</ZoomValue>
          <button aria-label="Ajustar a la página"><Art w={21} h={16} c="#605e5c" sw={1.600}><path d="M1 1h19v14H1zM4 7V4h3M14 4h3v3M17 10v3h-3M7 13H4v-3" /></Art></button>
        </ZoomTools>
      </StatusBar>
    </Shell>
  );
}
